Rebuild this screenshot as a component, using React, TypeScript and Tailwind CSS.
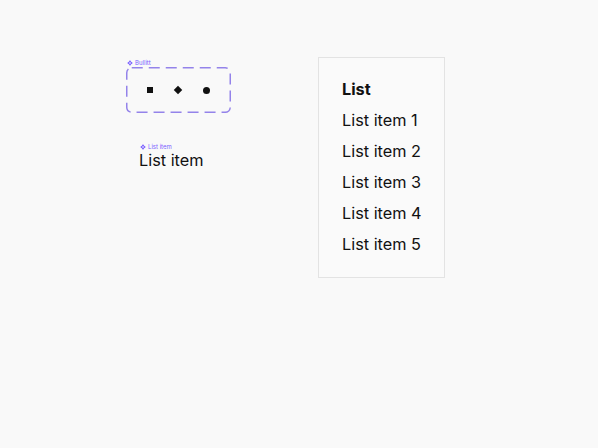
function ComponentIcon() {
  return (
    <svg width="6" height="6" viewBox="0 0 10 10" className="shrink-0">
      <path d="M5 0.5 L7 2.5 L5 4.5 L3 2.5 Z M7.5 3 L9.5 5 L7.5 7 L5.5 5 Z M2.5 3 L4.5 5 L2.5 7 L0.5 5 Z M5 5.5 L7 7.5 L5 9.5 L3 7.5 Z" fill="#7b61ff" />
    </svg>
  );
}

const items = ["List item 1", "List item 2", "List item 3", "List item 4", "List item 5"];

function App() {
  return (
    <div
      className="relative w-[598px] h-[448px] bg-[#f9f9f9] overflow-hidden text-[#111]"
      style={{ fontFamily: "Inter, 'Liberation Sans', sans-serif" }}
    >
      {/* Bullet component set */}
      <div className="absolute left-[127px] top-[59px] flex items-center gap-[2px] text-[6px] leading-[8px] text-[#7b61ff]">
        <ComponentIcon />
        <span>Bullitt</span>
      </div>
      <div className="absolute left-[126px] top-[67px] w-[105px] h-[46px] flex items-center justify-between px-[21px]">
        <svg className="absolute inset-0" width="105" height="46">
          <rect
            x="0.75"
            y="0.75"
            width="103.5"
            height="44.5"
            rx="5"
            fill="none"
            stroke="#9483ea"
            strokeWidth="1.5"
            strokeDasharray="11 6"
          />
        </svg>
        <span className="w-[6px] h-[6px] bg-[#111]" />
        <span className="w-[6px] h-[6px] bg-[#111] rotate-45" />
        <span className="w-[7px] h-[7px] rounded-full bg-[#111]" />
      </div>

      {/* List item component */}
      <div className="absolute left-[139px] top-[143px] flex flex-col">
        <div className="flex items-center gap-[2px] text-[6px] leading-[8px] text-[#7b61ff] pl-[1px]">
          <ComponentIcon />
          <span>List item</span>
        </div>
        <span className="text-[16.3px] leading-[18px]">List item</span>
      </div>

      {/* List */}
      <div className="absolute left-[318px] top-[57px] w-[127px] h-[221px] border border-[#e3e3e3] bg-[#fafafa] pl-[23px] pt-[16px]">
        <div className="text-[16.3px] leading-[31px] font-bold">List</div>
        {items.map((t) => (
          <div key={t} className="text-[16.3px] leading-[31px]">
            {t}
          </div>
        ))}
      </div>
    </div>
  );
}

export default App;
